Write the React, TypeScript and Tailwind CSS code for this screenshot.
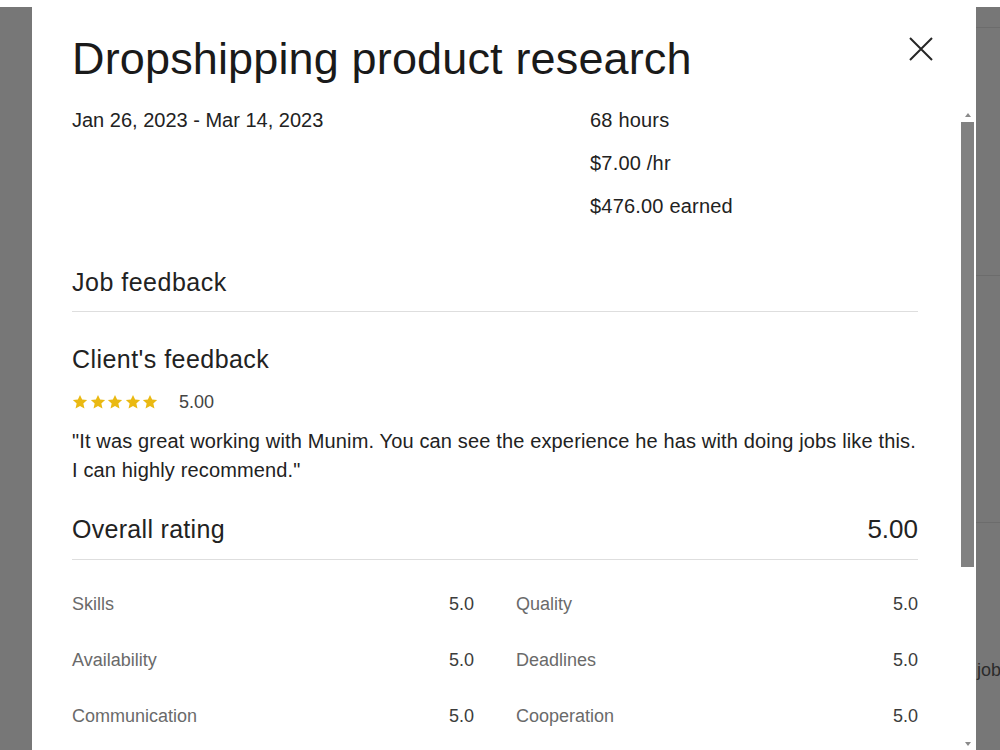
import React from 'react';

const ratings = [
  { label: 'Skills', value: '5.0' },
  { label: 'Quality', value: '5.0' },
  { label: 'Availability', value: '5.0' },
  { label: 'Deadlines', value: '5.0' },
  { label: 'Communication', value: '5.0' },
  { label: 'Cooperation', value: '5.0' },
];

function Star() {
  return (
    <svg width="16" height="16" viewBox="0 0 24 24" className="shrink-0">
      <path
        fill="#eab912"
        d="M12 1.4l3.2 7 7.5.7-5.7 5.1 1.7 7.5L12 17.9l-6.7 3.8 1.7-7.5-5.7-5.1 7.5-.7z"
      />
    </svg>
  );
}

function CloseIcon() {
  return (
    <svg width="24" height="24" viewBox="0 0 24 24" fill="none" stroke="#262626" strokeWidth="2" strokeLinecap="butt">
      <path d="M1 1l22 22M23 1L1 23" />
    </svg>
  );
}

export default function App() {
  return (
    <div className="flex h-[750px] w-[1000px] overflow-hidden bg-white font-['Liberation_Sans',Arial,sans-serif] text-[#222]">
      {/* dimmed page behind the dialog, left edge */}
      <div className="mt-[7px] w-[32px] shrink-0 bg-[#777777]" />

      {/* dialog */}
      <div className="flex w-[944px] shrink-0 flex-col bg-white">
        <div className="flex items-start justify-between pl-[40px] pr-[43px] pt-[31px] pb-[21px]">
          <h1 className="text-[45px] leading-[56px] tracking-[0.15px] text-[#1a1a1a]">Dropshipping product research</h1>
          <button className="mt-[6px]">
            <CloseIcon />
          </button>
        </div>

        <div className="flex min-h-0 flex-1">
          {/* scrollable body */}
          <div className="flex-1 pl-[40px] pr-[42px]">
            <div className="flex">
              <div className="w-[518px] text-[20px] leading-[24px]">Jan 26, 2023 - Mar 14, 2023</div>
              <div className="flex flex-col gap-[19px] text-[20px] leading-[24px] tracking-[0.2px]">
                <div>68 hours</div>
                <div>$7.00 /hr</div>
                <div>$476.00 earned</div>
              </div>
            </div>

            <h2 className="mt-[48px] text-[25px] leading-[32px] tracking-[0.5px]">Job feedback</h2>
            <div className="mt-[13px] h-px bg-[#dedede]" />

            <h3 className="mt-[31px] text-[25px] leading-[32px] tracking-[0.45px]">Client's feedback</h3>
            <div className="mt-[15px] flex h-[24px] items-center">
              <div className="flex gap-[1.5px]">
                <Star />
                <Star />
                <Star />
                <Star />
                <Star />
              </div>
              <span className="ml-[21px] text-[18px] leading-[24px] text-[#444]">5.00</span>
            </div>
            <p className="mt-[13px] text-[20px] leading-[29px] tracking-[0.15px] text-[#222]">
              "It was great working with Munim. You can see the experience he has with doing jobs like this. I can highly recommend."
            </p>

            <div className="mt-[28px] flex items-baseline justify-between leading-[32px]">
              <span className="text-[25px] tracking-[0.3px]">Overall rating</span>
              <span className="text-[26px]">5.00</span>
            </div>
            <div className="mt-[14px] h-px bg-[#dedede]" />

            <div className="mt-[32px] grid grid-cols-2 gap-x-[42px] gap-y-[32px] text-[18px] leading-[24px]">
              {ratings.map((r) => (
                <div key={r.label} className="flex justify-between">
                  <span className="text-[#6a6a6a]">{r.label}</span>
                  <span className="text-[#3c3c3c]">{r.value}</span>
                </div>
              ))}
            </div>
          </div>

          {/* scrollbar */}
          <div className="flex w-[16px] shrink-0 flex-col">
            <div className="flex h-[14px] items-center justify-center pr-[1px]">
              <div className="h-0 w-0 border-x-[3.5px] border-b-[4px] border-x-transparent border-b-[#8a8a8a]" />
            </div>
            <div className="ml-[1px] h-[445px] w-[13px] bg-[#818181]" />
            <div className="flex-1" />
            <div className="flex h-[8px] items-start justify-center pr-[1px]">
              <div className="h-0 w-0 border-x-[3.5px] border-t-[4px] border-x-transparent border-t-[#8a8a8a]" />
            </div>
          </div>
        </div>
      </div>

      {/* dimmed page behind the dialog, right edge */}
      <div className="mt-[7px] flex flex-1 flex-col overflow-hidden bg-[#777777]">
        <div className="h-[21px] border-b border-[#6c6c6c]" />
        <div className="h-[248px] border-b border-[#6c6c6c]" />
        <div className="h-[247px] border-b border-[#6c6c6c]" />
        <div className="whitespace-nowrap pl-[1px] pt-[135px] text-[18px] leading-[24px] text-[#2b2b2b]">job</div>
      </div>
    </div>
  );
}
